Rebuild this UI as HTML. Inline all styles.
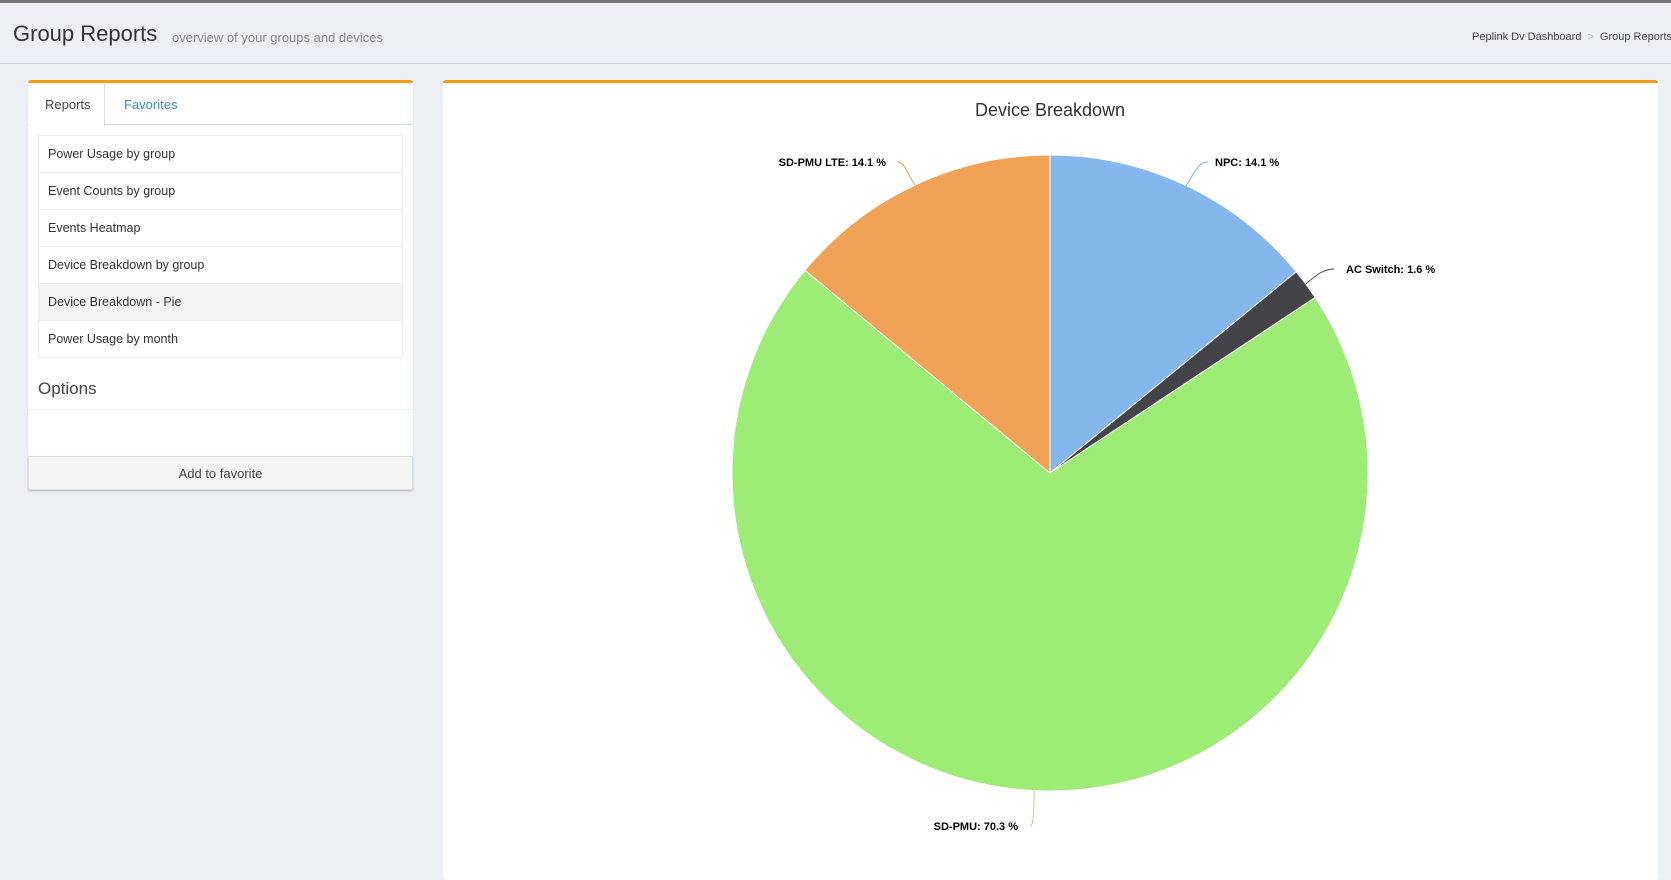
<!DOCTYPE html>
<html><head><meta charset="utf-8"><style>
*{box-sizing:border-box;margin:0;padding:0}
body{width:1671px;height:859px;overflow:hidden;background:#ecf0f5;font-family:"Liberation Sans",sans-serif;color:#333;position:relative}
.topbar{position:absolute;left:0;top:0;width:1671px;height:3px;background:#777}
.hdr{position:absolute;left:0;top:3px;width:1671px;height:61px;border-bottom:1px solid #d2d6de}
.title{position:absolute;left:13px;top:18px;font-size:22px;color:#333}
.sub{position:absolute;left:172px;top:27px;font-size:13px;color:#888}
.bc{position:absolute;left:1472px;top:28px;font-size:11px;color:#444;white-space:nowrap}
.bc span{color:#bbb;margin:0 6px}
.lp{position:absolute;left:28px;top:80px;width:385px;height:410px;background:#fff;border-top:3px solid #f39c12;border-radius:3px;box-shadow:0 1px 1px rgba(0,0,0,.1)}
.tabs{position:absolute;left:0;top:0;width:385px;height:42px;border-bottom:1px solid #ddd}
.tab1{position:absolute;left:1px;top:1px;width:76px;height:42px;background:#fff;border-right:1px solid #ddd;font-size:13px;color:#444;padding:13px 0 0 16px}
.tab2{position:absolute;left:96px;top:14px;font-size:13px;color:#3c8dbc}
.list{position:absolute;left:10px;top:52px;width:365px;border:1px solid #eee}
.list div{height:37px;border-top:1px solid #eee;font-size:12.5px;padding:11px 0 0 9px;color:#333}
.list div:first-child{border-top:none;height:36px}
.list .act{background:#f4f4f4}
.opt{position:absolute;left:10px;top:296px;font-size:17px;color:#444}
.div{position:absolute;left:0;top:326px;width:385px;border-top:1px solid #f0f0f0}
.btn{position:absolute;left:0;top:373px;width:385px;height:34px;background:#f4f4f4;border:1px solid #ddd;font-size:13px;text-align:center;padding-top:9px;color:#444;box-shadow:0 1px 2px rgba(0,0,0,.15)}
.rp{position:absolute;left:443px;top:80px;width:1215px;height:800px;background:#fff;border-top:3px solid #f39c12;border-radius:3px}
svg{position:absolute;left:0;top:0}
</style></head><body>
<div class="topbar"></div>
<div class="hdr"><div class="title">Group Reports</div><div class="sub">overview of your groups and devices</div><div class="bc">Peplink Dv Dashboard<span>&gt;</span>Group Reports</div></div>
<div class="lp">
<div class="tabs"><div class="tab1">Reports</div><div class="tab2">Favorites</div></div>
<div class="list"><div>Power Usage by group</div><div>Event Counts by group</div><div>Events Heatmap</div><div>Device Breakdown by group</div><div class="act">Device Breakdown - Pie</div><div>Power Usage by month</div></div>
<div class="opt">Options</div><div class="div"></div>
<div class="btn">Add to favorite</div>
</div>
<div class="rp"></div>
<svg width="1671" height="859">
<text x="1050" y="116" text-anchor="middle" font-size="18" fill="#333" font-family="Liberation Sans, sans-serif">Device Breakdown</text>
<g stroke="#fff" stroke-width="1">
<path d="M1050,473 L1050,155 A318,318 0 0 1 1296.3,271.8 Z" fill="#85b6ec"/>
<path d="M1050,473 L1296.3,271.8 A318,318 0 0 1 1315.2,297.5 Z" fill="#434348"/>
<path d="M1050,473 L1315.2,297.5 A318,318 0 1 1 805,270.3 Z" fill="#9dec76"/>
<path d="M1050,473 L805,270.3 A318,318 0 0 1 1050,155 Z" fill="#f0a256"/>
</g>
<g fill="none" stroke-width="1">
<path d="M1186,186 C1195,172 1198,162 1208,162" stroke="#85b6ec"/>
<path d="M1306,284 C1316,275 1324,269 1334,269" stroke="#434348"/>
<path d="M915,185 C906,172 905,162 897,162" stroke="#f0a256"/>
<path d="M1034,791 C1034,805 1034,826 1030,826" stroke="#9dec76"/>
</g>
<g font-size="11" font-weight="bold" fill="#000" font-family="Liberation Sans, sans-serif">
<text x="1215" y="166">NPC: 14.1 %</text>
<text x="1346" y="273">AC Switch: 1.6 %</text>
<text x="886" y="166" text-anchor="end">SD-PMU LTE: 14.1 %</text>
<text x="1018" y="830" text-anchor="end">SD-PMU: 70.3 %</text>
</g>
</svg>
</body></html>
